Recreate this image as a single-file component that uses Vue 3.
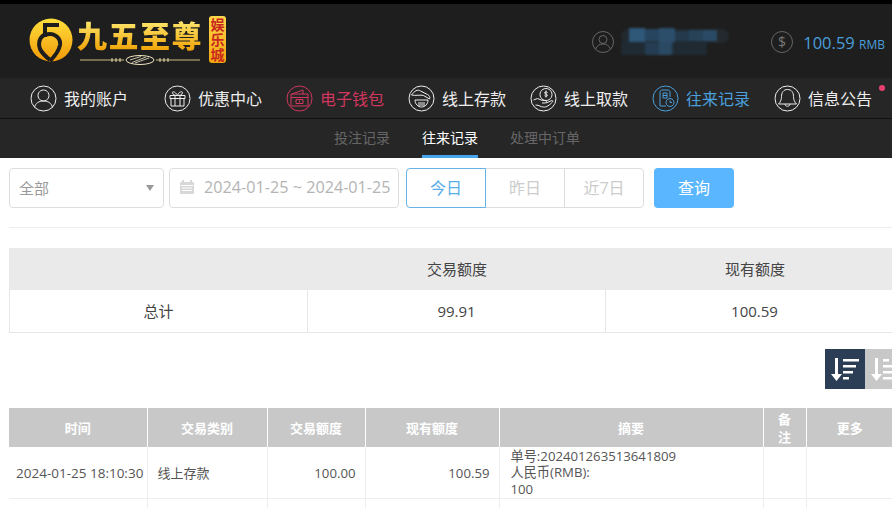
<template>
  <div class="page">
    <header class="top">
      <div class="logo">
        <svg class="logo-mark" width="44" height="44" viewBox="0 0 44 44">
          <defs>
            <linearGradient id="gold" x1="0" y1="0" x2="0" y2="1">
              <stop offset="0" stop-color="#ffdf3c" />
              <stop offset="1" stop-color="#f29a08" />
            </linearGradient>
          </defs>
          <circle cx="22" cy="22" r="21.500" fill="url(#gold)" />
          <g fill="none" stroke="#1d1d1d" stroke-width="4">
            <path d="M30 7H16V19" />
            <path d="M16 17c8-3 16 2 15 10-1 6-5 11-10 16" />
            <path d="M15 17c-5 3-6 9-4 14 2 4 5 7 10 11" />
          </g>
        </svg>
        <div class="logo-main">
          <span class="logo-text">九五至尊</span>
          <svg class="logo-line" width="124" height="12" viewBox="0 0 124 12">
            <path d="M2 6h44M78 6h44" stroke="#cdb981" stroke-width="1" />
            <path d="M34 4v4M38 4v4M42 4v4M82 4v4M86 4v4M90 4v4" stroke="#e8dcae" stroke-width="1" />
            <ellipse cx="62" cy="6" rx="14" ry="4.500" fill="none" stroke="#efe6c0" stroke-width="1" />
            <path d="M54 8.500 68 3M57 9 71 4M52 6 63 2.500" stroke="#c9c4aa" stroke-width="1" />
          </svg>
        </div>
        <span class="logo-tag">娱乐城</span>
      </div>
      <div class="account">
        <svg class="round-icon" width="24" height="24" viewBox="0 0 24 24" fill="none" stroke="#666" stroke-width="1">
          <circle cx="12" cy="12" r="10.500" />
          <circle cx="12" cy="9.500" r="4" />
          <path d="M4.500 19c1.500-3.500 4-5 7.500-5s6 1.500 7.500 5" />
        </svg>
        <svg class="mosaic" width="110" height="30" viewBox="0 0 110 30">
          <rect x="0" y="2" width="108" height="14" rx="7" fill="#22292f" />
          <rect x="0" y="14" width="86" height="14" fill="#1f2a33" />
          <rect x="8" y="1" width="16" height="14" fill="#2f5778" />
          <rect x="24" y="2" width="14" height="12" fill="#274560" />
          <rect x="38" y="1" width="16" height="14" fill="#2c4e6b" />
          <rect x="54" y="4" width="14" height="10" fill="#243a4c" />
          <rect x="68" y="3" width="14" height="11" fill="#274257" />
          <rect x="82" y="3" width="14" height="11" fill="#2a4b66" />
          <rect x="24" y="15" width="28" height="13" fill="#243d52" />
          <rect x="38" y="15" width="12" height="13" fill="#2a4a63" />
        </svg>
        <svg class="round-icon money" width="24" height="24" viewBox="0 0 24 24" fill="none" stroke="#666" stroke-width="1">
          <circle cx="12" cy="12" r="10.500" />
          <text x="12" y="17" text-anchor="middle" class="dollar">$</text>
        </svg>
        <span class="balance">100.59 <small>RMB</small></span>
      </div>
    </header>

    <nav class="nav">
      <a v-for="item in navItems" :key="item.label" class="nav-item" :class="item.cls">
        <svg width="27" height="27" viewBox="0 0 27 27" fill="none" stroke="currentColor" stroke-width="1">
          <circle cx="13.500" cy="13.500" r="12.500" />
          <path v-for="d in item.paths" :key="d" :d="d" />
        </svg>
        <span>{{ item.label }}</span>
        <i v-if="item.dot" class="dot"></i>
      </a>
    </nav>

    <div class="subnav">
      <a v-for="tab in tabs" :key="tab" class="tab" :class="{ active: tab === '往来记录' }">{{ tab }}</a>
    </div>

    <main class="content">
      <div class="filters">
        <div class="select">
          <span>全部</span>
          <i class="caret"></i>
        </div>
        <div class="date">
          <svg width="18" height="18" viewBox="0 0 18 18">
            <rect x="2" y="4" width="14" height="12" rx="1" fill="#d8d8d8" />
            <rect x="4" y="2" width="2" height="4" fill="#d8d8d8" />
            <rect x="12" y="2" width="2" height="4" fill="#d8d8d8" />
            <path d="M3 7.500h12M4 10h10M4 12.500h10" stroke="#fff" stroke-width="1" />
          </svg>
          <span>2024-01-25 ~ 2024-01-25</span>
        </div>
        <div class="range">
          <button class="on">今日</button>
          <button>昨日</button>
          <button>近7日</button>
        </div>
        <button class="query">查询</button>
      </div>

      <div class="summary">
        <div class="sum-row head">
          <div></div>
          <div>交易额度</div>
          <div>现有额度</div>
        </div>
        <div class="sum-row body">
          <div>总计</div>
          <div>99.91</div>
          <div>100.59</div>
        </div>
      </div>

      <div class="sorters">
        <button class="sort dark">
          <svg width="32" height="28" viewBox="0 0 32 28" fill="#fff">
            <path d="M6 3h3v16h4l-5.500 7L2 19h4z" />
            <rect x="14" y="4" width="16" height="2.500" />
            <rect x="14" y="10" width="13" height="2.500" />
            <rect x="14" y="16" width="10" height="2.500" />
            <rect x="14" y="22" width="6" height="2.500" />
          </svg>
        </button>
        <button class="sort light">
          <svg width="32" height="28" viewBox="0 0 32 28" fill="#fff">
            <path d="M6 3h3v16h4l-5.500 7L2 19h4z" />
            <rect x="14" y="4" width="6" height="2.500" />
            <rect x="14" y="10" width="10" height="2.500" />
            <rect x="14" y="16" width="13" height="2.500" />
            <rect x="14" y="22" width="16" height="2.500" />
          </svg>
        </button>
      </div>

      <table class="records">
        <colgroup>
          <col v-for="w in colWidths" :key="w.id" :style="{ width: w.px + 'px' }" />
        </colgroup>
        <thead>
          <tr>
            <th>时间</th>
            <th>交易类别</th>
            <th>交易额度</th>
            <th>现有额度</th>
            <th>摘要</th>
            <th>备注</th>
            <th>更多</th>
          </tr>
        </thead>
        <tbody>
          <tr>
            <td class="time">2024-01-25 18:10:30</td>
            <td>线上存款</td>
            <td class="num">100.00</td>
            <td class="num">100.59</td>
            <td class="memo">单号:202401263513641809<br />人民币(RMB):<br />100</td>
            <td></td>
            <td></td>
          </tr>
          <tr class="next"><td></td><td></td><td></td><td></td><td></td><td></td><td></td></tr>
        </tbody>
      </table>
    </main>
  </div>
</template>

<script setup>
const navItems = [
  { label: '我的账户', cls: 'first', paths: ['M13.500 5a5.500 5.500 0 1 1-.01 0', 'M4.500 22.500c1-4.500 4.500-6.500 9-6.500s8 2 9 6.500'] },
  { label: '优惠中心', paths: ['M6 10.500h15v3H6zM7 13.500h13V21H7zM11 10.500V21M16 10.500V21', 'M13.500 10.500C11 6 8 6 8.500 8s3 2.500 5 2.500c2 0 4.500-.5 5-2.500s-3.500-2-5 2.500'] },
  { label: '电子钱包', cls: 'pink', paths: ['M6 9l11-4v4', 'M5 9h17v12H5z', 'M5 12.500h17', 'M10 14.500h7v4h-7zM13.500 15.500v2'] },
  { label: '线上存款', paths: ['M3.500 10c3-4 6-6 9-4l7 3.500c2 1 3 3 2 4.500l-6-3.500c-3-1-8 .5-12-.5z', 'M7 15h13c0 4-3 7-6.500 7S7 19 7 15zM10 18h7M10 20h7'] },
  { label: '线上取款', paths: ['M16 3.500a6 6 0 1 1-.01 0', 'M17.500 7.500c-1-.8-3-.7-3 .5s3 1 3 2.200-2 1.300-3 .5M16 5.500v7', 'M3.500 15l4-1.500 5 2h3.500c1 1 0 2.500-1 2.500h-3M16 18l6-2.500c1 0 1 1 .5 1.500-3 3-6 5.500-9 5-3 0-4-2-8-2'] },
  { label: '往来记录', cls: 'blue', paths: ['M8 21V7c0-1 1-2 2-2h6c1 0 2 1 2 2v5M8 21h6', 'M11 8h4v5h-4zM11 10.500h4', 'M18 13.500a4 4 0 1 1-.01 0M18 15.500v2h2'] },
  { label: '信息公告', dot: true, paths: ['M13.500 4.500c4 0 6 3 6 7 0 3 1 5.500 3 7.500h-18c2-2 3-4.500 3-7.500 0-4 2-7 6-7z', 'M11 19c0 3 5 3 5 0'] }
]

const tabs = ['投注记录', '往来记录', '处理中订单']

const colWidths = [138, 120, 98, 134, 264, 43, 87].map((px, id) => ({ id, px }))
</script>

<style>
html, body {
  margin: 0;
  overflow: hidden;
  background: #fff;
}
</style>

<style scoped>
.page {
  width: 892px;
  height: 508px;
  overflow: hidden;
  font-family: "Open Sans", "Noto Sans CJK SC", sans-serif;
  color: #555;
  background: #fff;
}

/* Header */
.top {
  display: flex;
  justify-content: space-between;
  align-items: center;
  box-sizing: border-box;
  height: 78px;
  padding: 0 7px 0 29px;
  background: #1e1e1e;
  border-top: 4px solid #000;
}

.logo {
  display: flex;
  align-items: center;
}

.logo-mark {
  margin-top: -3px;
}

.logo-main {
  display: flex;
  flex-direction: column;
  align-items: center;
  margin-left: 4px;
}

.logo-text {
  font-family: "Noto Sans CJK SC", sans-serif;
  font-weight: 900;
  font-size: 30px;
  line-height: 34px;
  letter-spacing: 1.500px;
  color: #f4b90f;
  background: linear-gradient(#fff07a, #f0a205);
  -webkit-background-clip: text;
  background-clip: text;
  -webkit-text-fill-color: transparent;
}

.logo-line {
  margin-top: 3px;
}

.logo-tag {
  width: 17px;
  margin: -3px 0 0 6px;
  padding: 1px 0;
  font-family: "Noto Sans CJK SC", sans-serif;
  font-weight: 700;
  font-size: 14px;
  line-height: 15px;
  text-align: center;
  color: #c8281e;
  background: linear-gradient(#ffd84a, #f2a50f);
  border-radius: 3px;
}

.account {
  display: flex;
  align-items: center;
  padding-top: 2px;
}

.mosaic {
  margin-left: 6px;
  filter: blur(1px);
}

.money {
  margin-left: 39px;
}

.dollar {
  fill: #777;
  stroke: none;
  font-size: 14px;
}

.balance {
  margin-left: 9px;
  font-size: 16.500px;
  color: #4a9fdc;
}

.balance small {
  font-size: 12px;
}

/* Main nav */
.nav {
  display: flex;
  align-items: center;
  gap: 24px;
  height: 40px;
  padding-left: 30px;
  background: #262626;
  border-bottom: 1px solid #121212;
}

.nav-item {
  display: flex;
  align-items: center;
  gap: 7px;
  position: relative;
  font-size: 16px;
  color: #eee;
}

.nav-item.first {
  margin-right: 12px;
}

.nav-item.pink {
  color: #d2365f;
}

.nav-item.blue {
  color: #4a9fdc;
}

.dot {
  position: absolute;
  top: 0;
  right: -13px;
  width: 6px;
  height: 6px;
  border-radius: 50%;
  background: #e8406e;
}

/* Sub nav */
.subnav {
  display: flex;
  gap: 32px;
  height: 39px;
  padding-left: 334px;
  background: #262626;
}

.tab {
  box-sizing: border-box;
  height: 39px;
  font-size: 14px;
  line-height: 37px;
  color: #666;
}

.tab.active {
  color: #fff;
  border-bottom: 3px solid #46a5ec;
}

/* Filters */
.content {
  padding: 10px 0 0 9px;
}

.filters {
  display: flex;
  align-items: stretch;
  width: 883px;
  height: 40px;
  padding-bottom: 19px;
  border-bottom: 1px solid #eee;
}

.select,
.date {
  display: flex;
  align-items: center;
  box-sizing: border-box;
  padding-bottom: 2px;
  border: 1px solid #ddd;
  border-radius: 4px;
  font-size: 15px;
  color: #999;
}

.select {
  justify-content: space-between;
  width: 155px;
  padding-left: 9px;
  padding-right: 9px;
}

.caret {
  width: 0;
  height: 0;
  margin-top: 2px;
  border-left: 4px solid transparent;
  border-right: 4px solid transparent;
  border-top: 6px solid #999;
}

.date {
  gap: 8px;
  width: 230px;
  margin-left: 5px;
  padding-left: 8px;
  font-size: 16.200px;
  color: #b4b4b4;
  white-space: nowrap;
}

.range {
  display: flex;
  width: 238px;
  margin-left: 7px;
}

.range button {
  flex: 1;
  margin-left: -1px;
  padding: 0 0 2px;
  font: inherit;
  font-size: 16px;
  color: #ccc;
  background: #fff;
  border: 1px solid #ddd;
}

.range button:first-child {
  margin-left: 0;
  border-radius: 4px 0 0 4px;
}

.range button:last-child {
  border-radius: 0 4px 4px 0;
}

.range button.on {
  position: relative;
  color: #58aee6;
  border-color: #66b3e6;
}

.query {
  width: 80px;
  margin-left: 10px;
  padding: 0 0 2px;
  font: inherit;
  font-size: 16px;
  color: #fff;
  background: #5ab7ff;
  border: none;
  border-radius: 4px;
}

/* Summary */
.summary {
  width: 895px;
  margin-top: 20px;
  font-size: 15px;
  color: #444;
}

.sum-row {
  display: grid;
  grid-template-columns: 299px 298px 298px;
  text-align: center;
}

.sum-row > div {
  box-sizing: border-box;
}

.sum-row.head > div {
  height: 42px;
  line-height: 42px;
  background: #eaeaea;
}

.sum-row.body > div {
  height: 43px;
  line-height: 42px;
  border-right: 1px solid #e6e6e6;
  border-bottom: 1px solid #e6e6e6;
}

.sum-row.body > div:first-child {
  border-left: 1px solid #e6e6e6;
}

/* Sort buttons */
.sorters {
  display: flex;
  justify-content: flex-start;
  width: 100px;
  height: 40px;
  margin: 16px 0 19px 816px;
}

.sort {
  flex: none;
  display: flex;
  align-items: center;
  justify-content: center;
  width: 40px;
  height: 40px;
  padding: 0;
  border: none;
}

.sort.dark {
  background: #2c3e55;
}

.sort.light {
  background: #c8c8c8;
}

/* Records table */
.records {
  table-layout: fixed;
  width: 884px;
  border-collapse: collapse;
  font-size: 13px;
  color: #555;
}

.records th {
  height: 39px;
  padding: 0 12px;
  font-weight: 700;
  line-height: 18px;
  color: #fff;
  background: #c8c8c8;
  border-left: 1px solid #fff;
}

.records th:first-child {
  border-left: none;
}

.records td {
  height: 51px;
  padding: 0 10px;
  border-left: 1px solid #eee;
  border-bottom: 1px solid #eee;
}

.records td:first-child {
  border-left: none;
}

.records td.time {
  padding: 0 0 0 7px;
  font-size: 13.500px;
  white-space: nowrap;
}

.records td.num {
  padding: 0 9px;
  font-size: 13.200px;
  text-align: right;
}

.records td.memo {
  padding: 0 10px 0 11px;
  font-size: 13.200px;
  line-height: 16.500px;
  white-space: nowrap;
}
</style>
